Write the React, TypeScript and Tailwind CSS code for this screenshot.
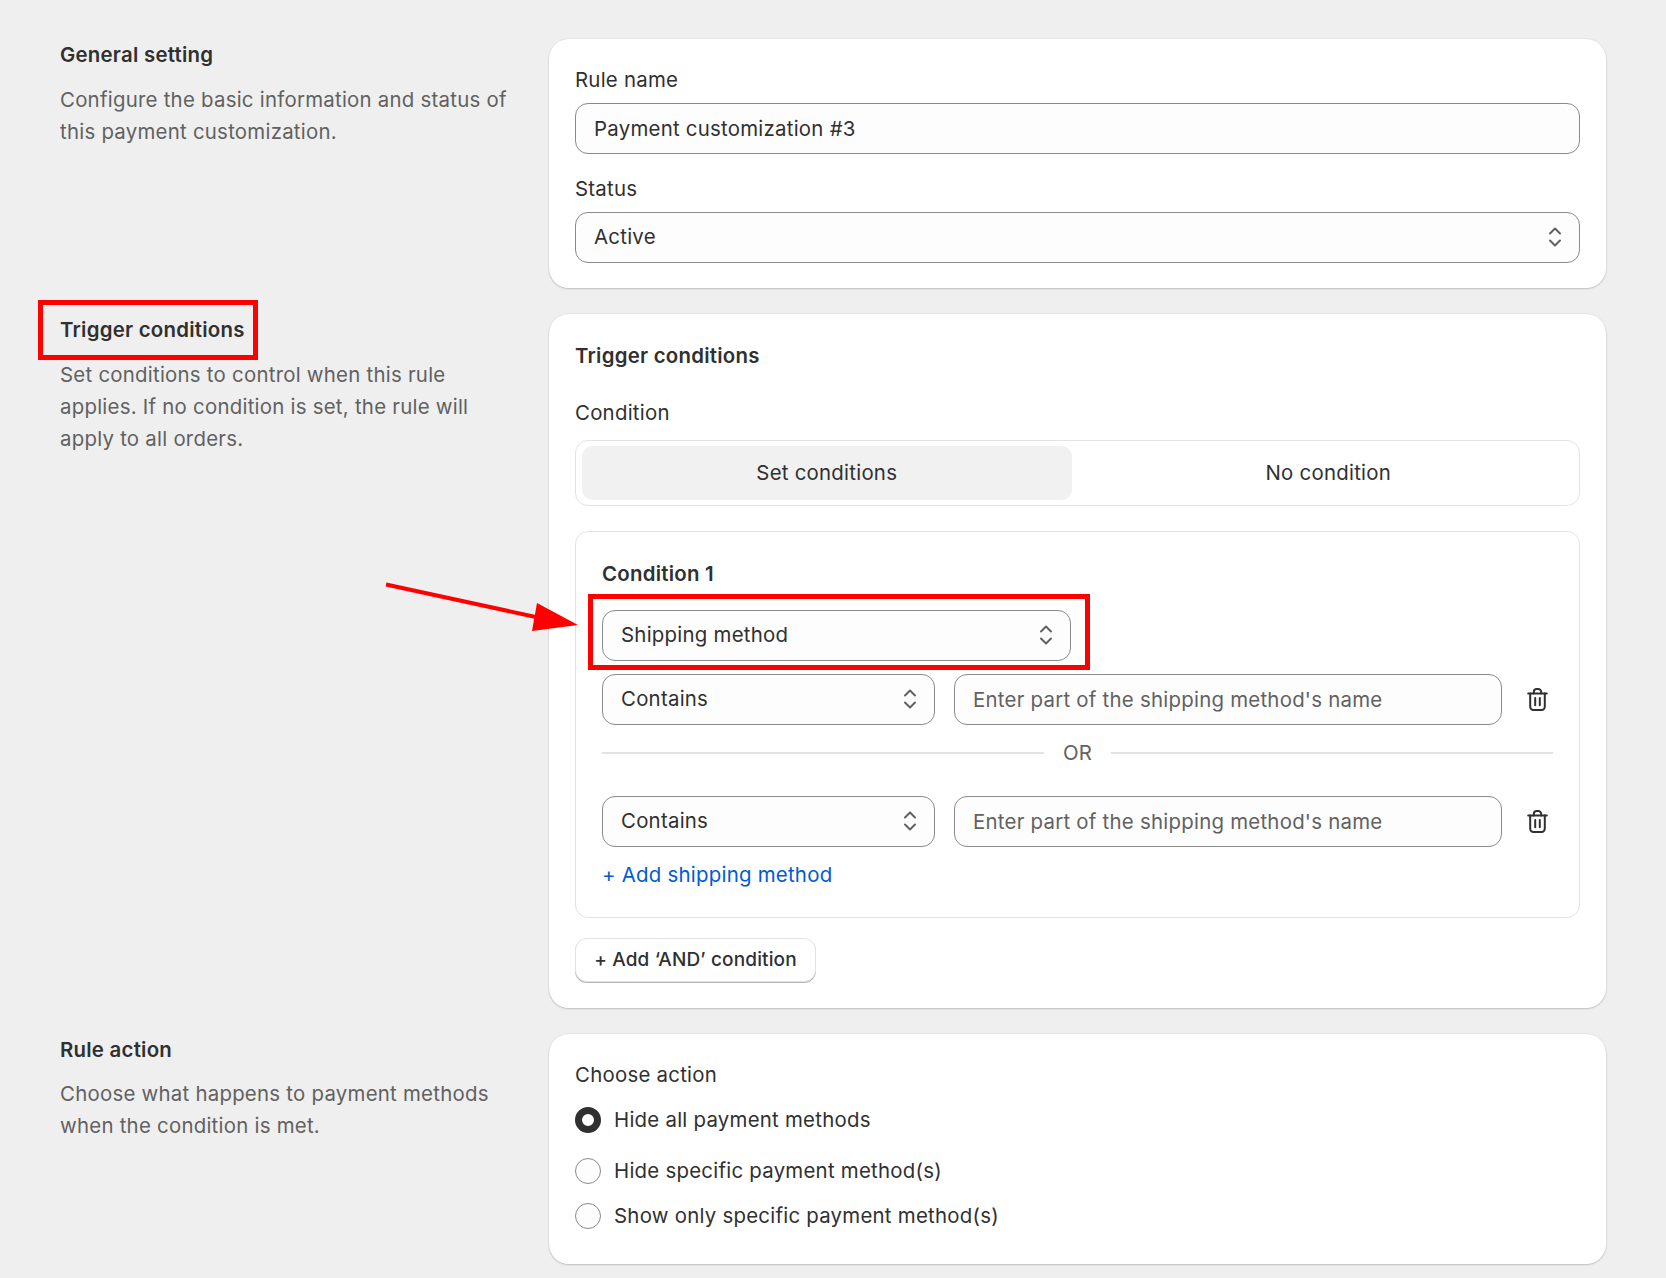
// Payment customization rule form, with the red annotation marks on top
const fieldBox =
  'h-[51px] rounded-[13px] border border-[#8a8a8a] bg-[#fdfdfd] px-[18px] pb-px text-[#303030] outline-none';

function Chevrons() {
  return (
    <svg width="14" height="22" viewBox="0 0 14 22" fill="none" stroke="#616161" strokeWidth="2" strokeLinecap="round" strokeLinejoin="round">
      <path d="M2 7.5 7 2.5l5 5" />
      <path d="M2 14.5 7 19.5l5-5" />
    </svg>
  );
}

function TrashIcon() {
  return (
    <svg width="21" height="23" viewBox="0 0 21 23" fill="none" stroke="#303030" strokeWidth="2" strokeLinecap="round" strokeLinejoin="round">
      <path d="M1.2 5.5h18.6" />
      <path d="M6.8 5.5V4a3 3 0 0 1 3-3h1.4a3 3 0 0 1 3 3v1.5" />
      <path d="M3.2 5.5v13.3a3.2 3.2 0 0 0 3.2 3.2h8.2a3.2 3.2 0 0 0 3.2-3.2V5.5" />
      <path d="M8.2 10v7.2M12.8 10v7.2" />
    </svg>
  );
}

function SelectBox({ label, className }: { label: string; className: string }) {
  return (
    <div className={`${fieldBox} flex items-center justify-between pr-[17px] ${className}`}>
      <span>{label}</span>
      <Chevrons />
    </div>
  );
}

function Card({ children, className }: { children: React.ReactNode; className: string }) {
  return (
    <section className={`rounded-[20px] bg-white px-[26px] shadow-[0_1px_2px_rgba(0,0,0,0.18),0_0_0_1px_rgba(0,0,0,0.03)] ${className}`}>
      {children}
    </section>
  );
}

function Intro({ title, lines, gap }: { title: string; lines: string[]; gap: string }) {
  return (
    <div>
      <h2 className={`font-semibold text-[#303030] ${gap}`}>{title}</h2>
      {lines.map((line) => (
        <p key={line} className="text-[#616161]">
          {line}
        </p>
      ))}
    </div>
  );
}

function MethodRow() {
  return (
    <div className="flex items-center">
      <SelectBox label="Contains" className="w-[333px] shrink-0" />
      <input
        readOnly
        placeholder="Enter part of the shipping method's name"
        className={`${fieldBox} ml-[19px] min-w-0 flex-1 placeholder:text-[#616161]`}
      />
      <div className="ml-[20px] flex w-[31px] shrink-0 justify-center">
        <TrashIcon />
      </div>
    </div>
  );
}

function Radio({ label, checked, className }: { label: string; checked?: boolean; className: string }) {
  return (
    <div className={`flex items-center gap-[13px] ${className}`}>
      {checked ? (
        <span className="h-[26px] w-[26px] rounded-full border-[7px] border-[#303030] bg-white" />
      ) : (
        <span className="h-[26px] w-[26px] rounded-full border border-[#8a8a8a] bg-[#fdfdfd]" />
      )}
      <span>{label}</span>
    </div>
  );
}

export default function App() {
  return (
    <div className="relative min-h-[1278px] bg-[#efefef] px-[60px] pb-[15px] pt-[39px] text-[20.4px] leading-[32px] tracking-[0.25px] text-[#303030] [font-family:Inter,sans-serif]">
      <div className="grid grid-cols-[489px_1fr] gap-y-[26px]">
        <Intro
          title="General setting"
          gap="mb-[13px]"
          lines={['Configure the basic information and status of', 'this payment customization.']}
        />
        <Card className="pb-[25px] pt-[25px]">
          <label className="mb-[7px] block">Rule name</label>
          <input readOnly value="Payment customization #3" className={`${fieldBox} block w-full`} />
          <label className="mb-[7px] mt-[19px] block">Status</label>
          <SelectBox label="Active" className="w-full" />
        </Card>

        <Intro
          title="Trigger conditions"
          gap="mb-[13px]"
          lines={[
            'Set conditions to control when this rule',
            'applies. If no condition is set, the rule will',
            'apply to all orders.',
          ]}
        />
        <Card className="pb-[26px] pt-[26px]">
          <h3 className="font-semibold">Trigger conditions</h3>
          <label className="mb-[11px] mt-[25px] block">Condition</label>
          <div className="grid h-[66px] grid-cols-2 gap-3 rounded-[13px] border border-[#e3e3e3] px-[6px] py-[5px]">
            <div className="flex items-center justify-center rounded-[11px] bg-[#f1f1f1]">Set conditions</div>
            <div className="flex items-center justify-center">No condition</div>
          </div>

          <div className="mt-[25px] rounded-[13px] border border-[#e3e3e3] px-[26px] pb-[26px] pt-[26px]">
            <h4 className="font-semibold">Condition 1</h4>
            <SelectBox label="Shipping method" className="mt-[20px] w-[469px]" />
            <div className="mt-[13px]">
              <MethodRow />
            </div>
            <div className="mt-[12px] flex items-center gap-[19px]">
              <div className="h-[2px] flex-1 bg-[#e3e3e3]" />
              <span className="text-[#616161]">OR</span>
              <div className="h-[2px] flex-1 bg-[#e3e3e3]" />
            </div>
            <div className="mt-[27px]">
              <MethodRow />
            </div>
            <a className="mt-[12px] block text-[#005bd3]">+ Add shipping method</a>
          </div>

          <button className="mt-[20px] block h-[44px] w-[241px] rounded-[12px] border border-[#e3e3e3] bg-white text-[19px] font-medium tracking-[0.15px] shadow-[0_1px_0_#b5b5b5]">
            + Add ‘AND’ condition
          </button>
        </Card>

        <Intro
          title="Rule action"
          gap="mb-[12px]"
          lines={['Choose what happens to payment methods', 'when the condition is met.']}
        />
        <Card className="pb-[32px] pt-[25px]">
          <label className="block">Choose action</label>
          <Radio label="Hide all payment methods" checked className="mt-[13px]" />
          <Radio label="Hide specific payment method(s)" className="mt-[19px]" />
          <Radio label="Show only specific payment method(s)" className="mt-[13px]" />
        </Card>
      </div>

      {/* annotations drawn over the screenshot */}
      <div className="absolute left-[38px] top-[300px] h-[60px] w-[220px] border-[5px] border-[#ff0000]" />
      <div className="absolute left-[588px] top-[594px] h-[76px] w-[502px] border-[5px] border-[#ff0000]" />
      <svg className="absolute left-[380px] top-[578px]" width="204" height="60" viewBox="0 0 204 60" fill="#ff0000">
        <path d="M6 6.5 165 41" stroke="#ff0000" strokeWidth="4" fill="none" />
        <path d="M157 25 198 47 152 53Z" />
      </svg>
    </div>
  );
}
